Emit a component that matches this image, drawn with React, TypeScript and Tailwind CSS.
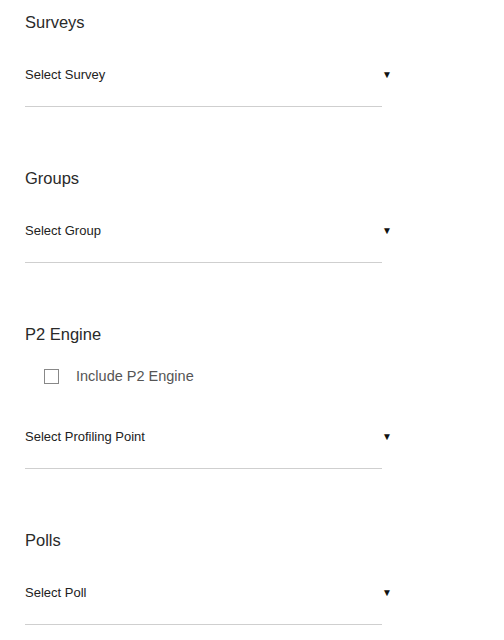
import React from "react";

function SelectRow({ label }: { label: string }) {
  return (
    <div>
      <div className="flex w-[367px] h-[20px] items-center justify-between text-[13px] leading-[20px] text-[#222]">
        <span>{label}</span>
        <span className="text-[10px] text-[#111]">▼</span>
      </div>
      <div className="mt-[21px] h-px w-[357px] bg-[#cfcfcf]" />
    </div>
  );
}

function Heading({ children }: { children: React.ReactNode }) {
  return <h2 className="h-[20px] text-[16.5px] leading-[20px] text-[#2a2a2a]">{children}</h2>;
}

export default function App() {
  return (
    <div
      className="min-h-[640px] w-[504px] bg-white px-[25px] pt-[12px]"
      style={{ fontFamily: '"Liberation Sans", Arial, sans-serif' }}
    >
      <section>
        <Heading>Surveys</Heading>
        <div className="mt-[33px]">
          <SelectRow label="Select Survey" />
        </div>
      </section>
      <section className="mt-[61px]">
        <Heading>Groups</Heading>
        <div className="mt-[33px]">
          <SelectRow label="Select Group" />
        </div>
      </section>
      <section className="mt-[61px]">
        <Heading>P2 Engine</Heading>
        <label className="mt-[22px] ml-[19px] flex h-[20px] items-center gap-[17px]">
          <span className="block h-[15px] w-[15px] border-[1.5px] border-[#888] bg-white" />
          <span className="text-[14.5px] leading-[20px] text-[#555]">Include P2 Engine</span>
        </label>
        <div className="mt-[41px]">
          <SelectRow label="Select Profiling Point" />
        </div>
      </section>
      <section className="mt-[61px]">
        <Heading>Polls</Heading>
        <div className="mt-[33px]">
          <SelectRow label="Select Poll" />
        </div>
      </section>
    </div>
  );
}
